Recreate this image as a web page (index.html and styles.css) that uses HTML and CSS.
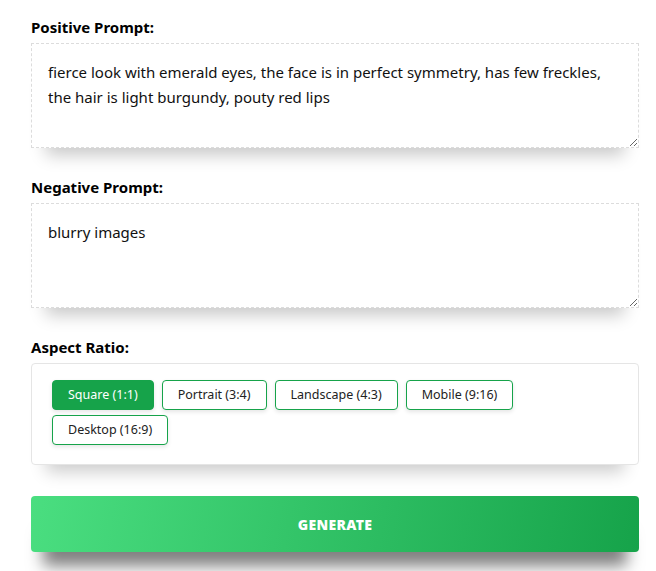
FILE: index.html
```html
<!DOCTYPE html>
<html lang="en">
<head>
    <meta charset="UTF-8">
    <meta name="viewport" content="width=device-width, initial-scale=1.0">
    <title>Prompt Form</title>
    <link rel="stylesheet" href="styles.css">
</head>
<body>
    <div class="form-container">
        <div class="form-group">
            <label for="positive">Positive Prompt:</label>
            <textarea id="positive">fierce look with emerald eyes, the face is in perfect symmetry, has few freckles, the hair is light burgundy, pouty red lips</textarea>
        </div>

        <div class="form-group">
            <label for="negative">Negative Prompt:</label>
            <textarea id="negative">blurry images</textarea>
        </div>

        <div class="form-group last">
            <label>Aspect Ratio:</label>
            <div class="ratio-box">
                <button class="ratio active">Square (1:1)</button>
                <button class="ratio">Portrait (3:4)</button>
                <button class="ratio">Landscape (4:3)</button>
                <button class="ratio">Mobile (9:16)</button>
                <button class="ratio">Desktop (16:9)</button>
            </div>
        </div>

        <button class="generate">Generate</button>
    </div>
</body>
</html>
```

FILE: styles.css
```css
body {
    margin: 0;
    font-family: "Noto Sans", "Open Sans", sans-serif;
    background: #fff;
    color: #111;
}
.form-container {
    width: 608px;
    padding: 17px 0 40px 31px;
}
.form-group {
    margin-bottom: 29px;
}
.form-group.last {
    margin-bottom: 31px;
}
label {
    display: block;
    font-weight: bold;
    font-size: 15px;
    margin-bottom: 6px;
    color: #000;
}
textarea {
    display: block;
    box-sizing: border-box;
    width: 100%;
    height: 105px;
    padding: 16px 16px;
    border: 1px dashed #dcdcdc;
    font-family: inherit;
    font-size: 15px;
    line-height: 25px;
    color: #111;
    resize: vertical;
    box-shadow: 0 22px 16px -15px rgba(0,0,0,0.22);
}
.ratio-box {
    display: flex;
    flex-wrap: wrap;
    gap: 5px 8px;
    padding: 16px 20px 19px;
    border: 1px solid #e5e5e5;
    border-radius: 4px;
    box-shadow: 0 22px 16px -15px rgba(0,0,0,0.2);
}
.ratio {
    font-family: inherit;
    font-size: 12.5px;
    padding: 5px 15px;
    line-height: 18px;
    background: #fff;
    color: #222;
    border: 1px solid #16a34a;
    border-radius: 4px;
    box-shadow: 0 2px 4px rgba(0,0,0,0.1);
    cursor: pointer;
}
.ratio.active {
    background: #16a34a;
    color: #fff;
}
.generate {
    display: block;
    width: 100%;
    height: 56px;
    border: none;
    border-radius: 4px;
    background: linear-gradient(100deg, #4ade80, #16a34a);
    color: #fff;
    font-family: inherit;
    font-weight: 900;
    font-size: 14px;
    text-transform: uppercase;
    letter-spacing: 0.3px;
    box-shadow: 0 26px 16px -12px rgba(0,0,0,0.5);
    cursor: pointer;
}
```
